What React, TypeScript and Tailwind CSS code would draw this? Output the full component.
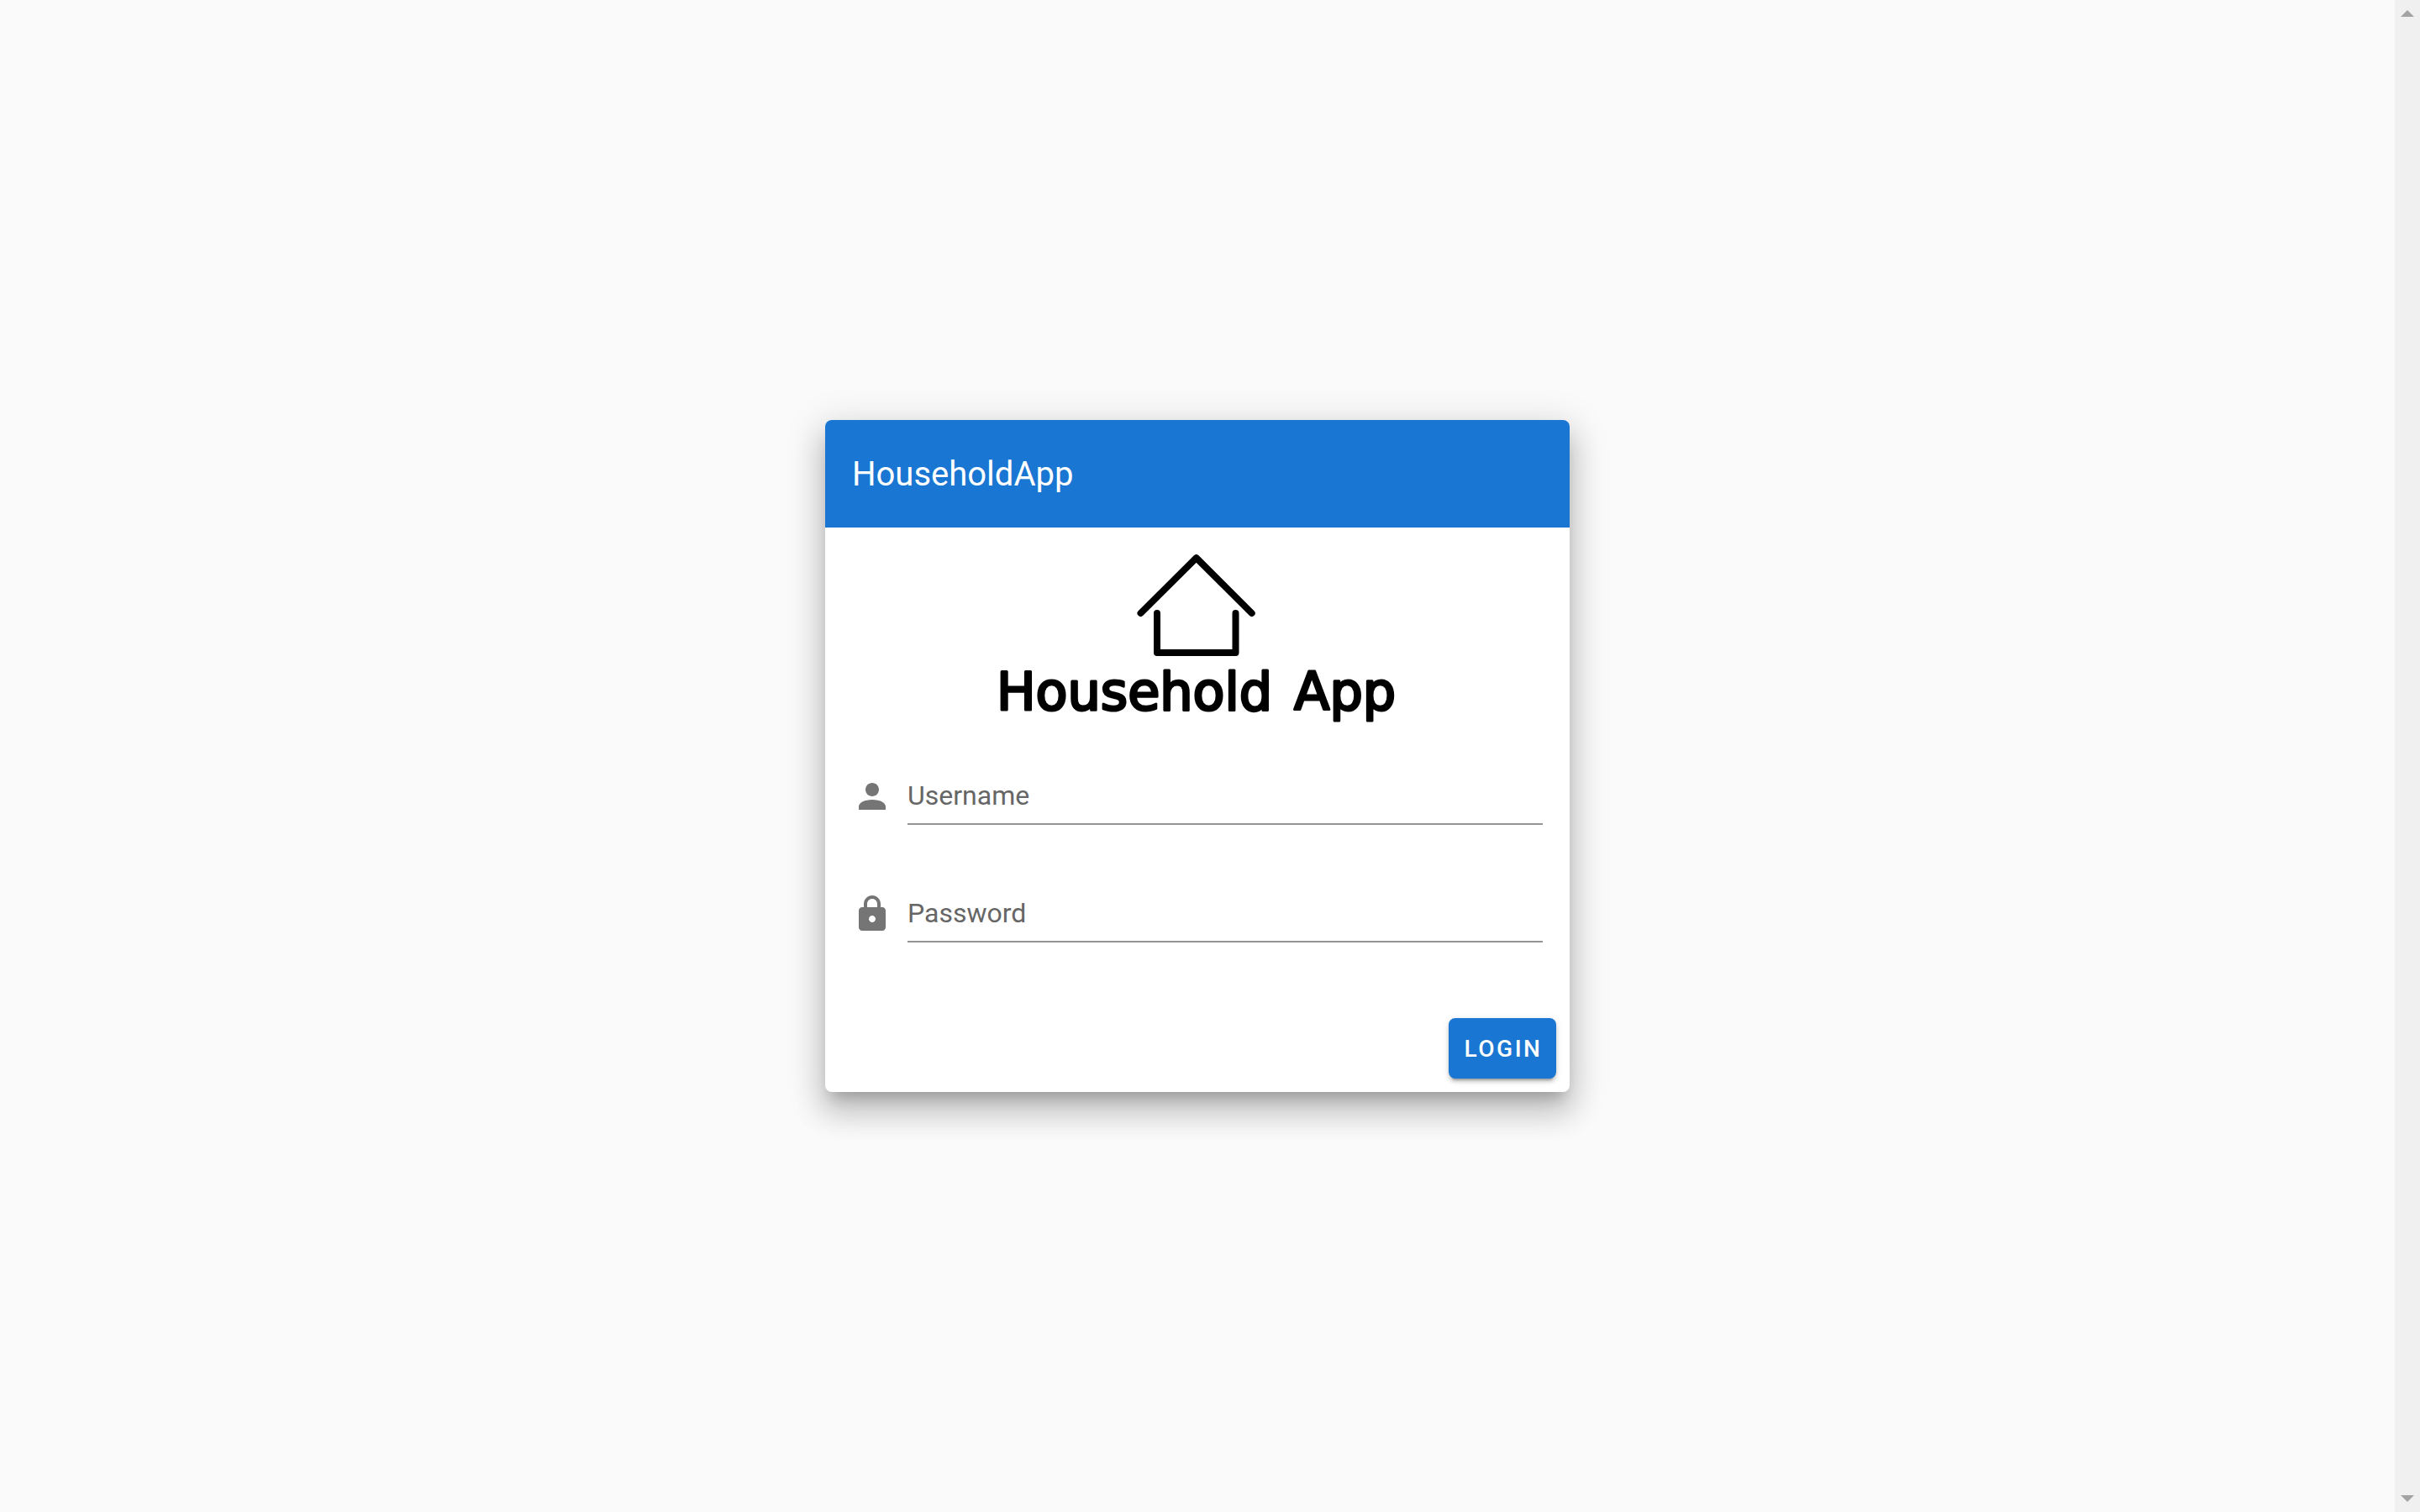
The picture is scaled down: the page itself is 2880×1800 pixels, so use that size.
import type { ReactNode } from "react";

function Logo() {
  return (
    <svg viewBox="0 0 480 208" className="mx-auto h-52 w-[480px]" role="img" aria-label="Household App">
      <g fill="none" stroke="#000" strokeWidth="8" strokeLinecap="round" strokeLinejoin="round">
        <path d="M172.500 70 238.700 4.200 304.700 70" />
        <path d="M192 70V117H285.500V70" />
      </g>
      <g
        fontFamily="DejaVu Sans, sans-serif"
        fontSize="62"
        fill="#000"
        stroke="#000"
        strokeWidth="3"
        strokeLinejoin="round"
      >
        <text x="1" y="185">Household</text>
        <text x="355" y="185">App</text>
      </g>
    </svg>
  );
}

type FieldProps = { id: string; label: string; type: string; icon: ReactNode };

function Field({ id, label, type, icon }: FieldProps) {
  return (
    <div className="flex items-center gap-[18px]">
      <label htmlFor={id} aria-label={label} className="shrink-0">
        <svg viewBox="0 0 24 24" className="size-12 fill-[#757575]" aria-hidden="true">
          {icon}
        </svg>
      </label>
      <input
        id={id}
        type={type}
        placeholder={label}
        className="h-[68px] min-w-0 flex-1 border-b-2 border-[#949494] bg-transparent text-[32px] text-black/87 outline-none placeholder:text-[#666666]"
      />
    </div>
  );
}

function ScrollTrack() {
  return (
    <div className="flex w-[30px] shrink-0 flex-col items-center justify-between bg-[#f0f0f0] py-3" aria-hidden="true">
      <svg viewBox="0 0 16 8" className="h-2 w-4 fill-[#a3a3a3]">
        <path d="M8 0 16 8H0Z" />
      </svg>
      <svg viewBox="0 0 16 8" className="h-2 w-4 fill-[#a3a3a3]">
        <path d="M0 0H16L8 8Z" />
      </svg>
    </div>
  );
}

export default function App() {
  return (
    <div className="flex min-h-screen bg-[#fafafa] font-['Roboto',sans-serif]">
      <main className="flex flex-1 items-center justify-center px-6">
        <div className="w-1/3 px-6">
          <form
            onSubmit={(event) => event.preventDefault()}
            className="overflow-hidden rounded-lg bg-white shadow-[0_14px_16px_-8px_rgba(0,0,0,0.2),0_24px_34px_4px_rgba(0,0,0,0.14),0_10px_44px_8px_rgba(0,0,0,0.12)]"
          >
            <header className="flex h-32 items-center bg-[#1976d2] px-8 pt-0.5">
              <h1 className="text-[40px] leading-[60px] text-white">HouseholdApp</h1>
            </header>
            <div className="px-8 pt-8 pb-[74px]">
              <Logo />
              <div className="mt-[46px] flex flex-col gap-[72px]">
                <Field
                  id="username"
                  label="Username"
                  type="text"
                  icon={
                    <path d="M12 12c2.210 0 4-1.790 4-4s-1.790-4-4-4-4 1.790-4 4 1.790 4 4 4zm0 2c-4.420 0-8 1.790-8 4v2h16v-2c0-2.210-3.580-4-8-4z" />
                  }
                />
                <Field
                  id="password"
                  label="Password"
                  type="password"
                  icon={
                    <path d="M18 8h-1V6c0-2.760-2.240-5-5-5S7 3.240 7 6v2H6c-1.100 0-2 .9-2 2v10c0 1.100.9 2 2 2h12c1.100 0 2-.9 2-2V10c0-1.100-.9-2-2-2zm-6 9c-1.100 0-2-.9-2-2s.9-2 2-2 2 .9 2 2-.9 2-2 2zm3-9H9V6c0-1.660 1.340-3 3-3s3 1.340 3 3v2z" />
                  }
                />
              </div>
            </div>
            <div className="flex justify-end p-4">
              <button
                type="submit"
                className="h-[72px] w-32 rounded-lg bg-[#1976d2] pt-0.5 pl-0.5 text-[28px] font-medium tracking-[0.09em] text-white shadow-[0_6px_2px_-4px_rgba(0,0,0,0.2),0_4px_4px_0_rgba(0,0,0,0.14),0_2px_10px_0_rgba(0,0,0,0.12)]"
              >
                LOGIN
              </button>
            </div>
          </form>
        </div>
      </main>
      <ScrollTrack />
    </div>
  );
}
